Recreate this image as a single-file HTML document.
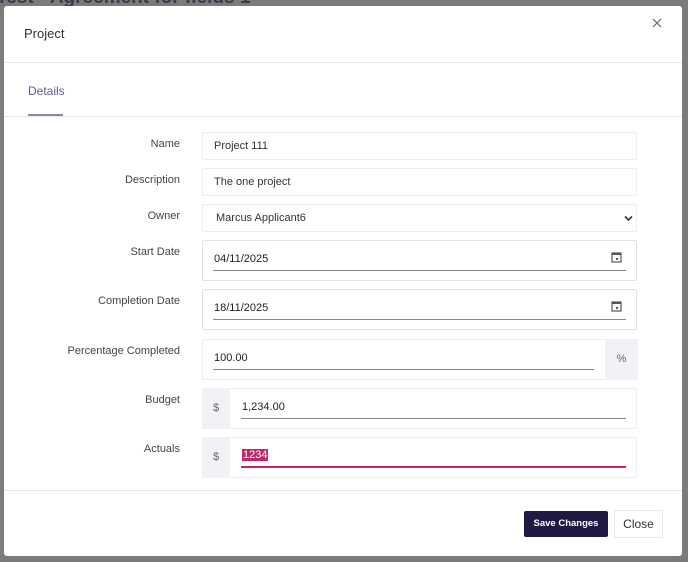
<!DOCTYPE html>
<html><head><style>
*{box-sizing:border-box;margin:0;padding:0}
body{width:688px;height:562px;background:#7b7b7b;font-family:"Liberation Sans",sans-serif;position:relative;overflow:hidden;font-size:11px;color:#333}
.bgt{position:absolute;left:-4px;top:-13px;font-size:19px;font-weight:bold;color:#3a3a4a}
.modal{position:absolute;left:4px;top:6px;width:678px;height:550px;background:#fff;border-radius:3px}
.a{position:absolute}
.lbl{position:absolute;right:502px;font-size:11px;color:#444;text-align:right;white-space:nowrap}
.box{position:absolute;left:198px;width:435px;border:1px solid #eeeef2;border-radius:2px;background:#fff}
.ul{position:absolute;border-bottom:1px solid #888}
.addon{position:absolute;background:#f1f2f6;color:#666;font-size:11px;text-align:center}
</style></head><body>
<div class="bgt">Test - Agreement for fields 1</div>
<div class="modal">
 <div class="a" style="left:20px;top:20px;font-size:13px;color:#333">Project</div>
 <svg class="a" style="left:648px;top:12px" width="10" height="10" viewBox="0 0 10 10"><path d="M1 1L9 9M9 1L1 9" stroke="#666" stroke-width="1.2"/></svg>
 <div class="a" style="left:0;top:56px;width:678px;border-top:1px solid #e6e6e6"></div>
 <div class="a" style="left:24px;top:78px;font-size:12px;color:#5b5b9a">Details</div>
 <div class="a" style="left:24px;top:108px;width:35px;border-top:2px solid #8a8aa8"></div>
 <div class="a" style="left:0;top:110px;width:678px;border-top:1px solid #e6e6e6"></div>

 <div class="lbl" style="top:132px">Name</div>
 <div class="box" style="top:126px;height:28px"><span class="a" style="left:11px;top:7px">Project 111</span></div>
 <div class="lbl" style="top:168px">Description</div>
 <div class="box" style="top:162px;height:28px"><span class="a" style="left:11px;top:7px">The one project</span></div>
 <div class="lbl" style="top:204px">Owner</div>
 <div class="box" style="top:198px;height:28px"><span class="a" style="left:13px;top:7px">Marcus Applicant6</span>
  <svg class="a" style="left:421px;top:10px" width="9" height="7" viewBox="0 0 9 7"><path d="M1 1.5L4.5 5L8 1.5" stroke="#333" stroke-width="1.6" fill="none"/></svg></div>

 <div class="lbl" style="top:240px">Start Date</div>
 <div class="box" style="top:234px;height:41px;border-color:#e2e2e2"><span class="a" style="left:11px;top:12px;font-size:11px;color:#222">04/11/2025</span>
  <div class="ul" style="left:10px;top:29px;width:413px"></div>
  <svg class="a" style="left:408px;top:10px" width="11" height="12" viewBox="0 0 11 12"><rect x="1" y="2" width="9" height="9" fill="none" stroke="#555" stroke-width="1.2"/><rect x="1" y="2" width="9" height="2" fill="#555"/><rect x="5" y="7" width="2" height="2" fill="#555"/></svg></div>
 <div class="lbl" style="top:289px">Completion Date</div>
 <div class="box" style="top:283px;height:41px;border-color:#e2e2e2"><span class="a" style="left:11px;top:12px;font-size:11px;color:#222">18/11/2025</span>
  <div class="ul" style="left:10px;top:29px;width:413px"></div>
  <svg class="a" style="left:408px;top:10px" width="11" height="12" viewBox="0 0 11 12"><rect x="1" y="2" width="9" height="9" fill="none" stroke="#555" stroke-width="1.2"/><rect x="1" y="2" width="9" height="2" fill="#555"/><rect x="5" y="7" width="2" height="2" fill="#555"/></svg></div>
 <div class="lbl" style="top:339px">Percentage Completed</div>
 <div class="box" style="top:333px;height:41px"><span class="a" style="left:11px;top:12px;font-size:11px;color:#222">100.00</span>
  <div class="ul" style="left:10px;top:29px;width:381px"></div>
  <div class="addon" style="left:402px;top:-1px;width:33px;height:41px;line-height:41px">%</div></div>
 <div class="lbl" style="top:388px">Budget</div>
 <div class="box" style="top:382px;height:41px"><div class="addon" style="left:-1px;top:-1px;width:28px;height:41px;line-height:41px">$</div>
  <span class="a" style="left:39px;top:12px;font-size:11px;color:#222">1,234.00</span>
  <div class="ul" style="left:38px;top:29px;width:385px"></div></div>
 <div class="lbl" style="top:437px">Actuals</div>
 <div class="box" style="top:431px;height:41px"><div class="addon" style="left:-1px;top:-1px;width:28px;height:41px;line-height:41px">$</div>
  <span class="a" style="left:39px;top:11px;font-size:11px;color:#fff;background:#c2256a;padding:0 1px">1234</span>
  <div class="a" style="left:38px;top:28px;width:385px;border-bottom:2px solid #c2256a"></div></div>

 <div class="a" style="left:0;top:484px;width:678px;border-top:1px solid #e6e6e6"></div>
 <div class="a" style="left:520px;top:505px;width:84px;height:26px;background:#1f1a42;border-radius:2px;color:#fff;font-size:9.5px;font-weight:bold;text-align:center;line-height:26px">Save Changes</div>
 <div class="a" style="left:610px;top:504px;width:49px;height:28px;border:1px solid #e8e8e8;border-radius:2px;color:#333;font-size:12px;text-align:center;line-height:26px">Close</div>
</div>
</body></html>
